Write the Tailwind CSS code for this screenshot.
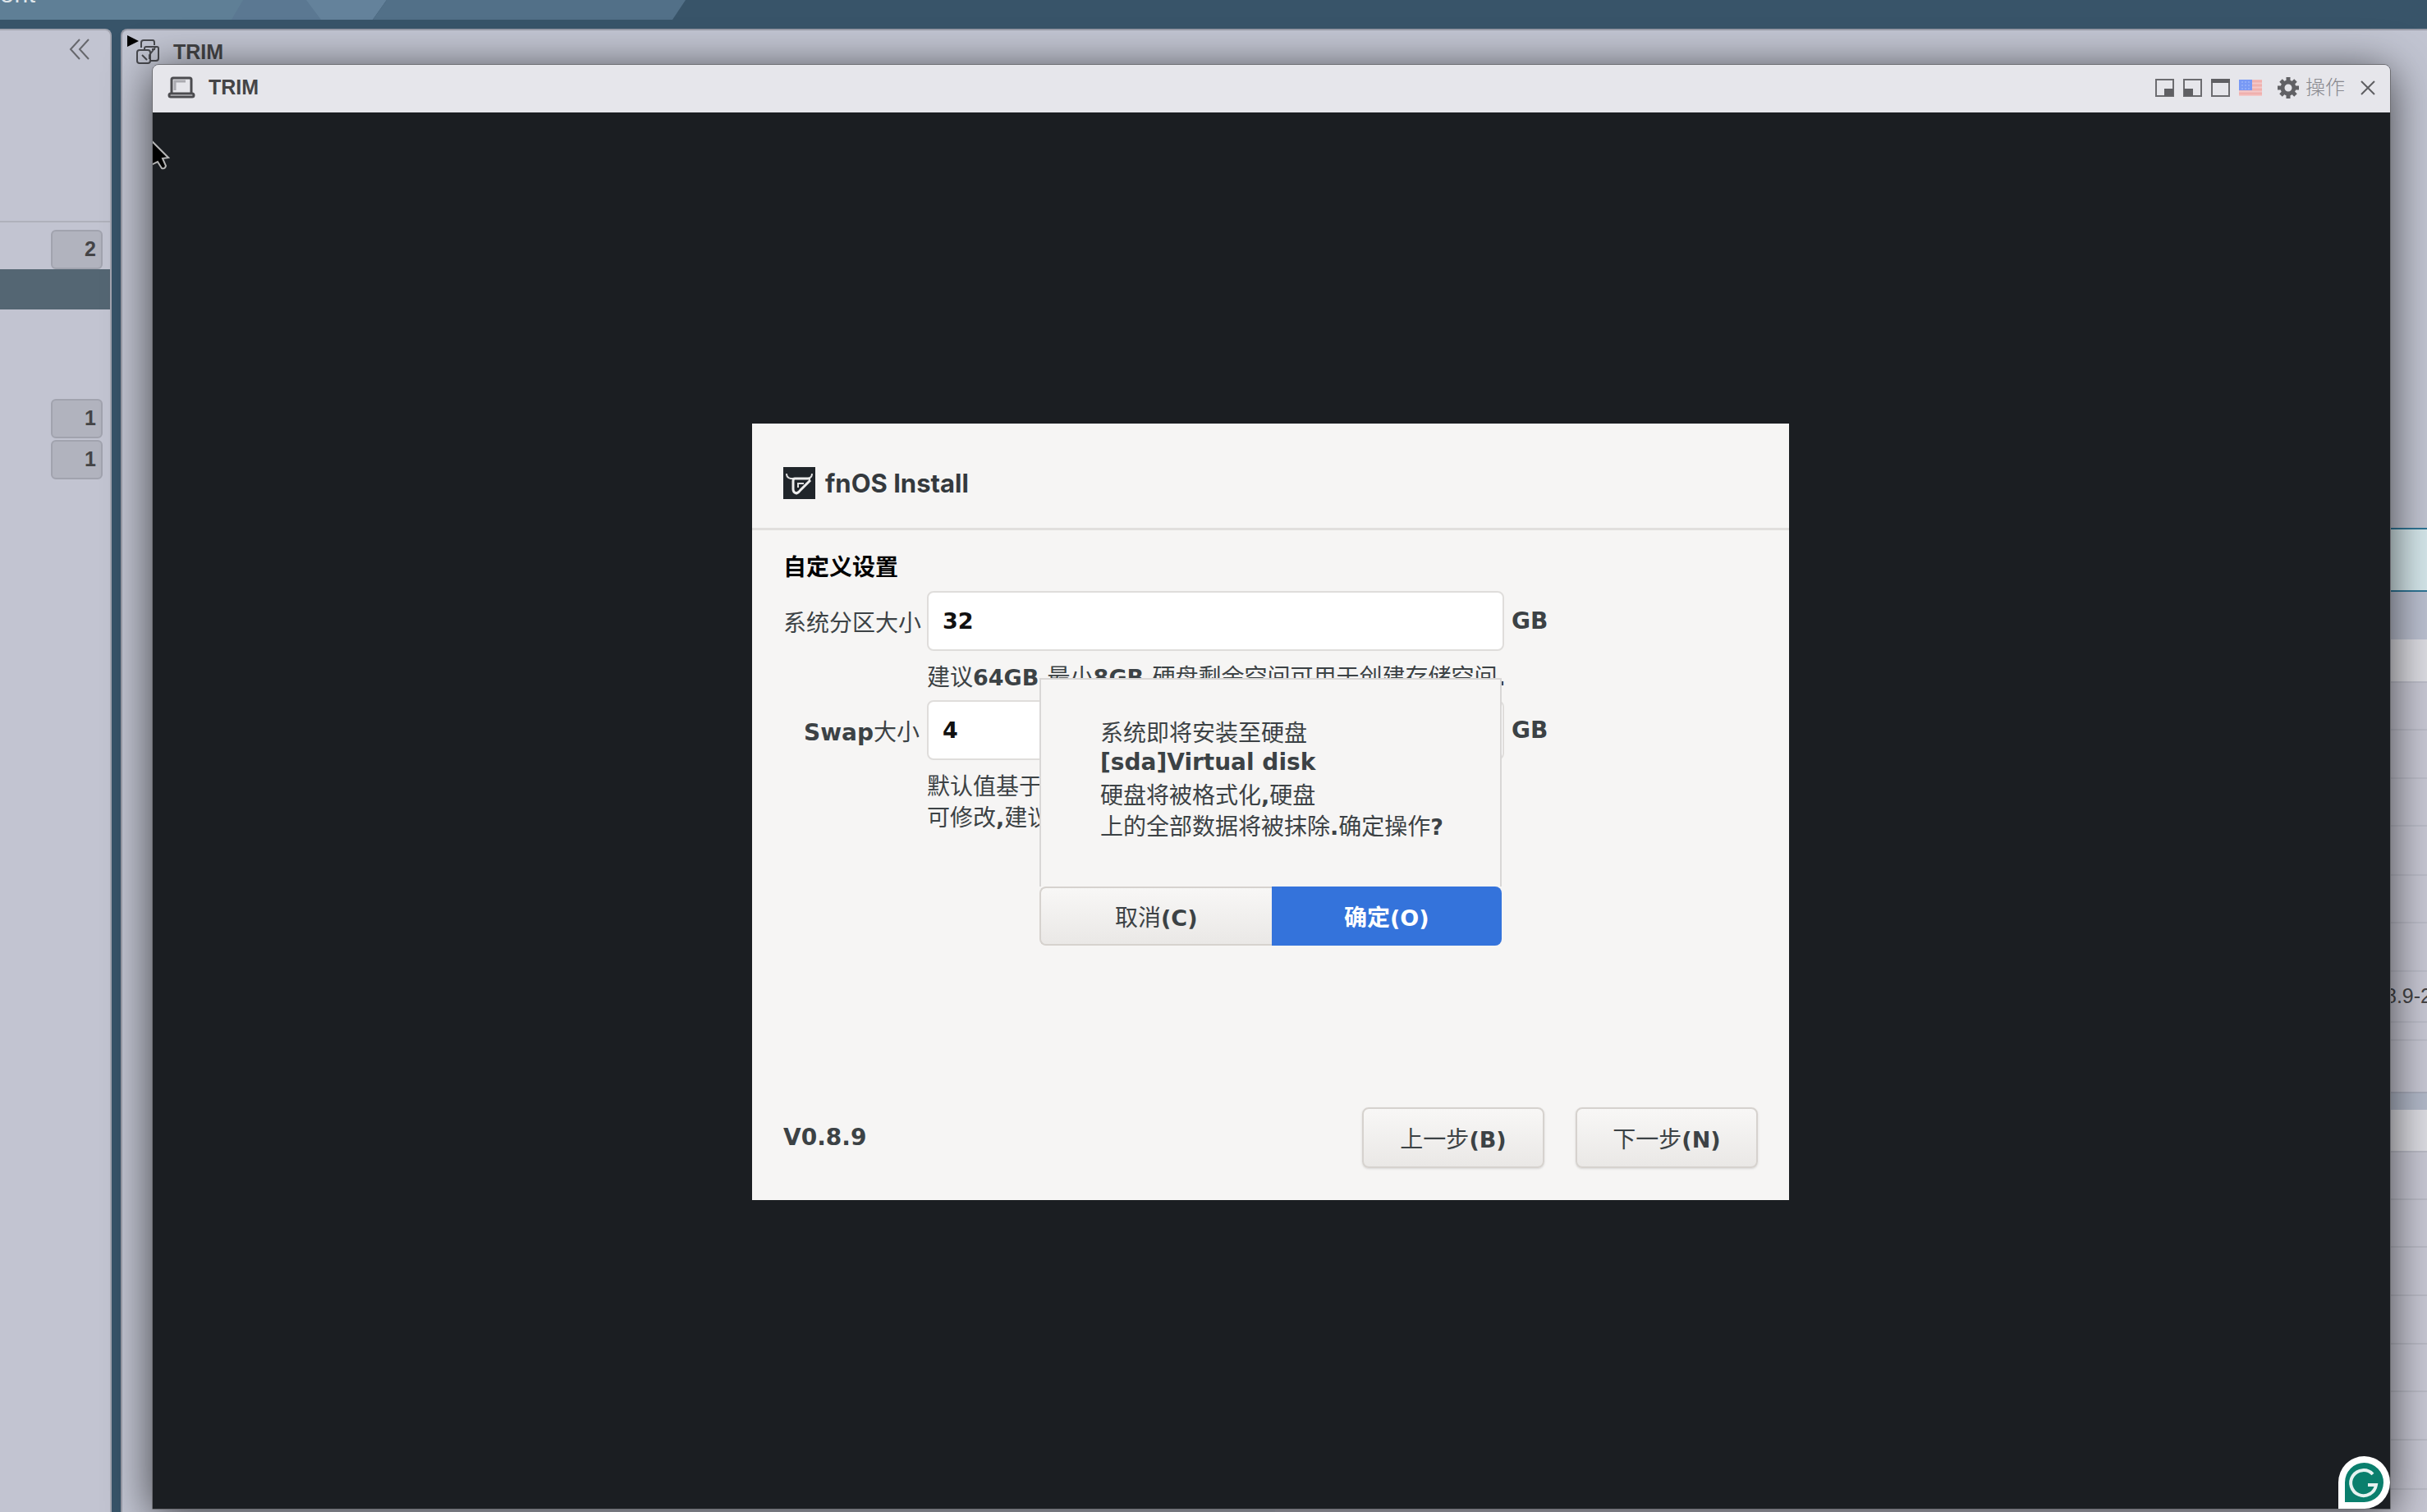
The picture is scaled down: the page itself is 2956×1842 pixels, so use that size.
<!DOCTYPE html>
<html lang="zh-CN">
<head>
  <meta charset="UTF-8" />
  <meta name="viewport" content="width=device-width, initial-scale=1.0" />
  <title>TRIM</title>
  <script src="https://cdn.jsdelivr.net/npm/@tailwindcss/browser@4"></script>
</head>
<body class="bg-[#385469] text-[#444446] font-['Liberation_Sans','Noto_Sans_CJK_SC',sans-serif]">
  <div class="relative h-screen overflow-hidden flex flex-col">

    <!-- Top banner -->
    <header class="relative h-6 shrink-0 overflow-hidden">
      <svg class="block" width="836" height="24" viewBox="0 0 836 24" aria-hidden="true">
        <path d="M0 0H300V24H0z" fill="#5f7f96" />
        <path d="M296 0H374L392 24H282z" fill="#5b7892" />
        <path d="M373 0H471L454 24H391z" fill="#64829b" />
        <path d="M471 0H835L819 24H454z" fill="#527088" />
      </svg>
      <span class="absolute left-0 top-[-23px] text-[30px] leading-8 tracking-wide text-[#dfe5ea]">ent</span>
    </header>

    <div class="flex flex-1 min-h-0 gap-[11px] pt-[11px]">

      <!-- Navigator -->
      <aside class="w-[136px] shrink-0 bg-[#c2c4d1] border-t-2 border-r-2 border-[#a3a5b0] rounded-tr-lg text-[25px] font-bold">
        <div class="h-[234px] flex justify-end items-start pt-[9px] pr-6 border-b-2 border-[#afb1bb]">
          <button aria-label="Collapse" class="block">
            <svg width="26" height="28" viewBox="0 0 26 28" fill="none" stroke="#66676c" stroke-width="2"><path d="M13 2 2 14l11 12M24 2 13 14l11 12" /></svg>
          </button>
        </div>
        <div class="h-[57px] flex justify-end items-end pr-[9px]"><span class="w-[63px] h-12 pr-[6px] flex items-center justify-end rounded-md border-2 border-[#a1a3ae] bg-[#b1b3be]">2</span></div>
        <div class="h-[49px] bg-[#546673]"></div>
        <div class="pt-[109px] pr-[9px] flex flex-col items-end gap-[2px]">
          <span class="w-[63px] h-12 pr-[6px] flex items-center justify-end rounded-md border-2 border-[#a1a3ae] bg-[#b1b3be]">1</span>
          <span class="w-[63px] h-12 pr-[6px] flex items-center justify-end rounded-md border-2 border-[#a1a3ae] bg-[#b1b3be]">1</span>
        </div>
      </aside>

      <!-- Host page behind the console -->
      <main class="flex-1 min-w-0 flex flex-col items-end overflow-hidden bg-[#c2c5d2] border-t-2 border-l-2 border-[#9a9ca8] rounded-tl-lg">
        <div class="w-full h-[606px] shrink-0 flex items-start pl-[6px] pt-[6px]">
          <svg width="42" height="38" viewBox="0 0 42 38" fill="none" aria-hidden="true">
            <path d="M0 0 14 7 0 14z" fill="#000" />
            <g stroke="#48494e" stroke-width="2">
              <path d="M17 15V9q0-3 3-3h11q2 0 2 3v3" />
              <rect x="12" y="18" width="16" height="16" rx="3" />
              <path d="M21 18v-2q0-2 2-2h13q2 0 2 2v12q0 3-3 3h-7M18 24l6 6M34 15l-7 9v5M30 17h4" />
            </g>
          </svg>
          <h1 class="pl-[14px] pt-[6px] text-[25px] leading-[28px] font-bold">TRIM</h1>
        </div>
        <div class="w-1/2 h-[78px] shrink-0 bg-[#d5e7eb] border-y-2 border-[#2f7696] shadow-md"></div>
        <div class="w-1/2 h-[58px] shrink-0 bg-[#bbc0d0]"></div>
        <section class="w-1/2 shrink-0 bg-[#c8c8d4] divide-y-2 divide-[#bcbdc9]">
          <div class="h-[53px] bg-[#dcdce2]"></div>
          <div class="h-[58px]"></div>
          <div class="h-[59px]"></div>
          <div class="h-[58px]"></div>
          <div class="h-[60px]"></div>
          <div class="h-[58px]"></div>
          <div class="h-[59px]"></div>
          <div class="h-[62px] flex items-center justify-end"><span class="w-[51px] whitespace-nowrap text-[25px]">8.9-2</span></div>
          <div class="h-[22px]"></div>
          <div class="h-[62px]"></div>
        </section>
        <div class="w-1/2 h-[22px] shrink-0 bg-[#b2b9c9] border-t-2 border-[#a9adbc]"></div>
        <section class="w-1/2 shrink-0 bg-[#c8c8d4] divide-y-2 divide-[#babbc6]">
          <div class="h-[52px] bg-[#dcdce2]"></div>
          <div class="h-[58px]"></div>
          <div class="h-[58px]"></div>
          <div class="h-[59px]"></div>
          <div class="h-[59px]"></div>
          <div class="h-[58px]"></div>
          <div class="h-[59px]"></div>
          <div class="h-[60px]"></div>
          <div class="h-[60px]"></div>
        </section>
      </main>
    </div>

    <!-- Console window -->
    <div class="absolute left-[185px] right-11 top-[78px] bottom-[3px] flex flex-col rounded-t-lg border border-[#6d6e73] shadow-[0_8px_54px_rgba(0,0,0,0.68)]">
      <div class="h-[58px] shrink-0 flex items-center px-[18px] pb-[2px] rounded-t-lg bg-[#e6e6eb]">
        <svg width="34" height="28" viewBox="0 0 34 28" fill="none" stroke="#4c4c50" stroke-width="3" aria-hidden="true">
          <path d="M5 20V4q0-2 2-2h20q2 0 2 2v16" /><rect x="2" y="21" width="30" height="4" rx="2" /><path d="M9 17V6h13" stroke="#aaaab0" />
        </svg>
        <h2 class="pl-4 text-[25px] font-bold">TRIM</h2>
        <div class="ml-auto flex items-center gap-[11px]">
          <button aria-label="Dock right"><svg class="block" width="23" height="22" viewBox="0 0 23 22"><path d="M1 1h21v20H1z" fill="none" stroke="#6c6c70" stroke-width="2" /><path d="M11 12h11v9H11z" fill="#5f5f63" /></svg></button>
          <button aria-label="Dock left"><svg class="block" width="23" height="22" viewBox="0 0 23 22"><path d="M1 1h21v20H1z" fill="none" stroke="#6c6c70" stroke-width="2" /><path d="M1 12h11v9H1z" fill="#5f5f63" /></svg></button>
          <button aria-label="Maximize"><svg class="block" width="23" height="22" viewBox="0 0 23 22"><path d="M1 1h21v20H1z" fill="none" stroke="#6c6c70" stroke-width="2" /><path d="M0 0h23v5H0z" fill="#5f5f63" /></svg></button>
          <button aria-label="Keyboard layout"><svg class="block" width="28" height="20" viewBox="0 0 28 20"><path d="M0 0h28v20H0z" fill="#f3c9c9" /><path d="M0 2h28M0 7h28M0 12h28M0 17h28" stroke="#f0b0ad" stroke-width="3" /><path d="M0 0h16v13H0z" fill="#7899f5" /><path d="M3 3h11M3 7h11M3 11h11" stroke="#a9c0fb" stroke-width="1" stroke-dasharray="2 2" /></svg></button>
          <button class="ml-2 flex items-center gap-2 text-2xl leading-8 font-light text-[#88888e]">
            <svg width="26" height="26" viewBox="0 0 26 26" fill="none" stroke="#616165" aria-hidden="true"><circle cx="13" cy="13" r="7" stroke-width="5" /><path d="M13 0v5M13 21v5M0 13h5M21 13h5M4 4l3 3M19 19l3 3M22 4l-3 3M7 19l-3 3" stroke-width="5" /></svg>
            操作
          </button>
          <button aria-label="Close" class="ml-2"><svg class="block" width="18" height="18" viewBox="0 0 18 18" stroke="#5e5e62" stroke-width="2"><path d="M1 1l16 16M17 1 1 17" /></svg></button>
        </div>
      </div>

      <!-- Guest screen -->
      <div class="relative flex-1 min-h-0 overflow-hidden bg-[#1b1e22] flex justify-center items-start pt-[379px] pr-[2px]">
        <svg class="absolute left-0 top-[34px]" width="21" height="38" viewBox="0 0 21 38" aria-hidden="true"><path d="M-4-2 19 21 12 22 16 31Q15 35 11 34L6 26-4 31z" fill="#000" stroke="#b5b5b5" stroke-width="2" /></svg>

        <div class="relative w-[1263px] h-[946px] flex flex-col bg-[#f6f5f4] text-[28px] leading-[38px] text-[#3c4245] font-['Noto_Sans_CJK_SC',sans-serif]">
          <div class="h-[130px] shrink-0 flex items-center gap-3 px-[38px] pt-[18px] border-b-3 border-[#e1dfdd]">
            <svg width="39" height="39" viewBox="0 0 39 39" fill="none" aria-hidden="true">
              <path d="M0 0h39v39H0z" fill="#20252a" />
              <path d="M4 8q0 5 5 6h21q5-1 5-6" stroke="#ddd" stroke-width="2" />
              <path d="M33 14H14q-2 0-2 3v10q0 4 4 5 3-1 5-4L33 16" stroke="#eee" stroke-width="3" /><path d="M18 25v-5h7" stroke="#ddd" stroke-width="2" />
            </svg>
            <h3 class="font-[Inter,sans-serif] font-bold text-[31px] text-[#34393d]">fnOS Install</h3>
          </div>

          <form class="flex-1 flex flex-col px-[38px] pt-6 pb-[39px]">
            <h4 class="font-bold text-black mb-3">自定义设置</h4>
            <div class="grid grid-cols-[166px_703px_auto] gap-x-[9px] items-center">
              <label for="sys" class="whitespace-nowrap">系统分区大小</label>
              <input id="sys" type="text" value="32" class="h-[73px] px-[17px] bg-white rounded-lg border-2 border-[#dfdddb] text-[27px] font-bold text-[#111] font-['DejaVu_Sans']">
              <span class="text-[28px] font-bold font-['DejaVu_Sans']">GB</span>
              <p class="col-start-2 col-span-2 py-[11px] whitespace-nowrap">建议<b class="text-[27px] leading-none font-['DejaVu_Sans']">64GB,</b>最小<b class="text-[27px] leading-none font-['DejaVu_Sans']">8GB,</b>硬盘剩余空间可用于创建存储空间<b class="text-[27px] leading-none font-['DejaVu_Sans']">.</b></p>
              <label for="swap" class="text-right whitespace-nowrap"><b class="leading-none font-['DejaVu_Sans']">Swap</b>大小</label>
              <input id="swap" type="text" value="4" class="h-[73px] px-[17px] bg-white rounded-lg border-2 border-[#dfdddb] text-[27px] font-bold text-[#111] font-['DejaVu_Sans']">
              <span class="text-[28px] font-bold font-['DejaVu_Sans']">GB</span>
              <p class="col-start-2 col-span-2 pt-[11px]">默认值基于<br>可修改<b class="text-[27px] leading-none font-['DejaVu_Sans']">,</b>建议</p>
            </div>

            <div class="mt-auto flex items-center gap-[38px]">
              <b class="mr-auto font-['DejaVu_Sans']">V0.8.9</b>
              <button type="button" class="w-[222px] h-[74px] rounded-lg border-2 border-[#d6d2ce] bg-linear-to-b from-[#f8f7f6] to-[#eae8e6] shadow-sm">上一步<b class="text-[27px] leading-none font-['DejaVu_Sans']">(B)</b></button>
              <button type="button" class="w-[222px] h-[74px] rounded-lg border-2 border-[#d6d2ce] bg-linear-to-b from-[#f8f7f6] to-[#eae8e6] shadow-sm">下一步<b class="text-[27px] leading-none font-['DejaVu_Sans']">(N)</b></button>
            </div>
          </form>

          <!-- Confirm popup -->
          <div role="dialog" aria-label="确定操作" class="absolute left-[350px] top-[310px] w-[563px] flex flex-col">
            <div class="h-[254px] px-[72px] pt-[44px] bg-[#f6f5f4] border-2 border-b-0 border-[#d9d7d6] whitespace-nowrap">
              <p>系统即将安装至硬盘</p>
              <p class="font-bold font-['DejaVu_Sans']">[sda]Virtual disk</p>
              <p>硬盘将被格式化<b class="text-[27px] leading-none font-['DejaVu_Sans']">,</b>硬盘</p>
              <p>上的全部数据将被抹除<b class="text-[27px] leading-none font-['DejaVu_Sans']">.</b>确定操作<b class="text-[27px] leading-none font-['DejaVu_Sans']">?</b></p>
            </div>
            <div class="h-[72px] flex bg-[#f6f5f4]">
              <button type="button" class="flex-1 rounded-l-lg border-2 border-r-0 border-[#d6d2ce] bg-linear-to-b from-[#f8f7f6] to-[#eae8e6]">取消<b class="text-[27px] leading-none font-['DejaVu_Sans']">(C)</b></button>
              <button type="button" class="flex-1 rounded-r-lg bg-[#3473db] text-white font-bold">确定<b class="text-[27px] leading-none font-['DejaVu_Sans']">(O)</b></button>
            </div>
          </div>
        </div>

        <!-- Grammarly badge -->
        <button aria-label="Grammarly" class="absolute right-0 bottom-0">
          <svg class="block" width="64" height="64" viewBox="0 0 64 64" fill="none"><path d="M1 64V32a31.500 32 0 1 1 31 32z" fill="#fff" /><path d="M9 56V32a23.500 24 0 1 1 23 24z" fill="#0a7f6d" /><path d="M43 22a15.500 15.500 0 1 0 4 13H37" stroke="#e6f2f0" stroke-width="4" /></svg>
        </button>
      </div>
    </div>
  </div>
</body>
</html>
